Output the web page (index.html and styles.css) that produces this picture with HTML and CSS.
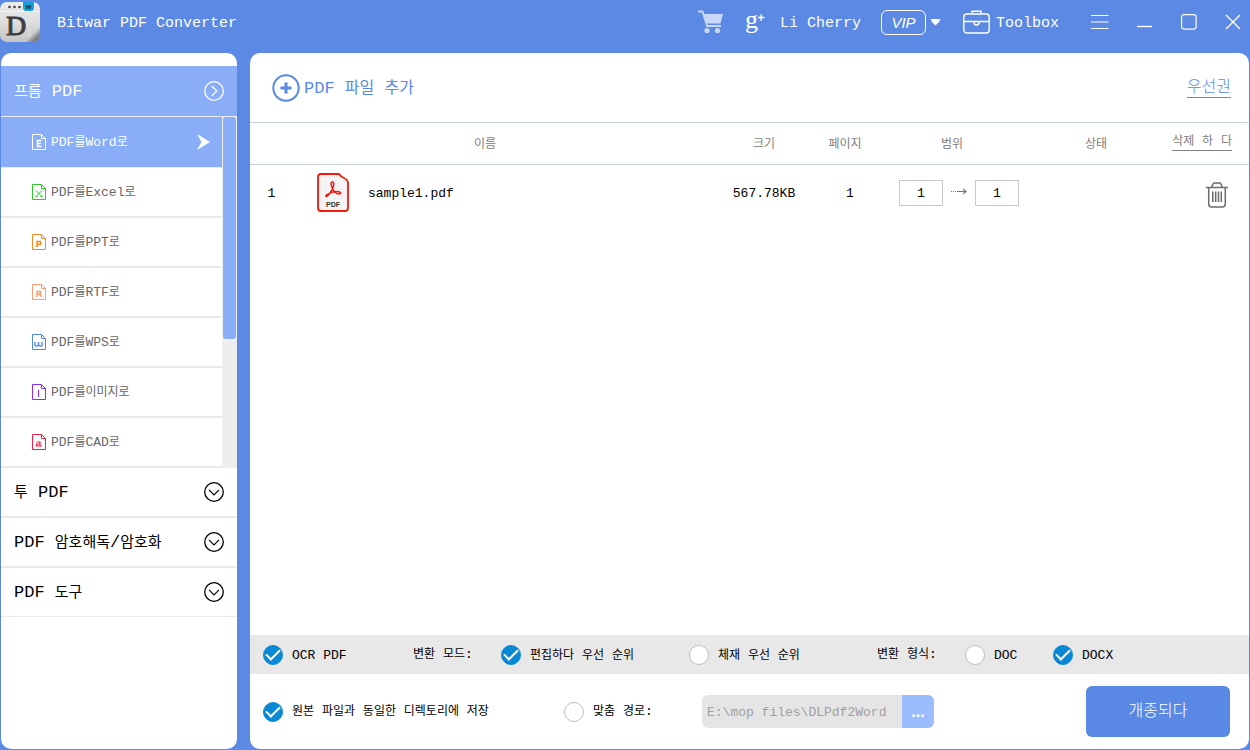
FILE: index.html
```html
<!DOCTYPE html>
<html lang="ko">
<head>
<meta charset="utf-8">
<title>Bitwar PDF Converter</title>
<meta name="viewport" content="width=device-width, initial-scale=1">
<link rel="stylesheet" href="styles.css">
</head>
<body>
<svg class="defs" aria-hidden="true">
  <symbol id="page" viewBox="0 0 14 16"><path d="M.5.5h9l4 4v11H.5zM9.5.5v4h4" fill="none" stroke="currentColor"/></symbol>
  <symbol id="chev" viewBox="0 0 22 22"><circle cx="11" cy="11" r="9.3" fill="none" stroke="currentColor" stroke-width="1.3"/><path d="M6 8.8l5 5 5-5" fill="none" stroke="currentColor" stroke-width="1.2"/></symbol>
</svg>
<header class="titlebar">
  <svg class="logo" viewBox="0 0 40 42">
    <defs>
      <linearGradient id="paper" x1="0" y1="0" x2="0" y2="1"><stop offset="0" stop-color="#ececec"/><stop offset=".5" stop-color="#dedede"/><stop offset="1" stop-color="#c4c4c4"/></linearGradient>
      <linearGradient id="curl" x1="0" y1="0" x2="1" y2="1"><stop offset="0" stop-color="#777"/><stop offset=".2" stop-color="#8b8b8b"/><stop offset=".35" stop-color="#fafafa"/><stop offset=".75" stop-color="#7f7f7f"/></linearGradient>
    </defs>
    <rect y="1" width="40" height="40" rx="7" fill="url(#paper)"/>
    <path d="M1 10.500h38" stroke="#f7f7f7"/>
    <circle cx="9.500" cy="6" r="1.300" fill="#444"/><circle cx="14.500" cy="6" r="1.300" fill="#444"/><circle cx="19.500" cy="6" r="1.300" fill="#444"/>
    <path d="M23 1h11v6q0 2-2 3h-7q-2-1-2-3z" fill="#16a0dc"/>
    <text x="28.500" y="7.500" class="logo-w">W</text>
    <text x="6" y="34" class="logo-d">D</text>
    <path d="M40 26v8q0 7-7 7h-9q4-3 5-8 7-1 11-7z" fill="url(#curl)"/>
  </svg>
  <h1 class="app-name">Bitwar PDF Converter</h1>
  <button class="bare cart" aria-label="Cart"><svg viewBox="0 0 26 24" width="26" height="24"><path d="M0 1.500h4.500L9 16h14" fill="none" stroke="#c9d8f7" stroke-width="1.800"/><path d="M6 4h19l-2.500 9.500H8.500z" fill="#c9d8f7"/><circle cx="9" cy="20.500" r="2.600" fill="#c9d8f7"/><circle cx="19.500" cy="20.500" r="2.600" fill="#c9d8f7"/></svg></button>
  <a class="user" href="#"><svg width="20" height="36" viewBox="0 0 20 36"><text x="0" y="24" class="g-letter">g</text><path d="M13 13.500h6.500M16.250 10.250v6.500" stroke="#fff" stroke-width="1.500"/></svg><span class="label">Li Cherry</span></a>
  <button class="bare vip"><span class="vip-box">VIP</span><svg width="11" height="8" viewBox="0 0 11 8"><path d="M.5 1h10L9 4 5.500 7.500 2 4z" fill="#fff"/></svg></button>
  <button class="bare toolbox"><svg width="27" height="24" viewBox="0 0 27 24" fill="none" stroke="#fff" stroke-width="1.400"><rect x=".8" y="4" width="25.400" height="19" rx="3"/><path d="M9 4V1.200h9V4M1 11.500h25M11 11.500v1q0 2.500 2.500 2.500t2.500-2.500v-1"/></svg><span class="label">Toolbox</span></button>
  <nav class="window-controls">
    <button class="bare" aria-label="Menu"><svg width="18" height="16" viewBox="0 0 18 16"><path d="M0 1.500h17.500M0 8h17.500M0 14.500h17.500" stroke="#fff" stroke-width="1.200"/></svg></button>
    <button class="bare" aria-label="Minimize"><svg width="16" height="16" viewBox="0 0 16 16"><path d="M0 12.500h15" stroke="#fff" stroke-width="1.400"/></svg></button>
    <button class="bare" aria-label="Maximize"><svg width="16" height="16" viewBox="0 0 16 16"><rect x=".6" y=".6" width="14.500" height="14.500" rx="2.500" fill="none" stroke="#fff" stroke-width="1.200"/></svg></button>
    <button class="bare" aria-label="Close"><svg width="16" height="16" viewBox="0 0 16 16"><path d="M1 1l14 14M15 1L1 15" stroke="#fff" stroke-width="1.400"/></svg></button>
  </nav>
</header>
<div class="workspace">
  <aside class="sidebar">
    <button class="group open"><span class="label"><span class="ko">프롬</span> PDF</span><svg class="chev turned"><use href="#chev"/></svg></button>
    <div class="submenu">
      <ul class="tasks">
        <li><button class="task current"><svg class="doc"><use href="#page"/><path d="M9.500 6.500h-4v6h4M5.500 9.500h3.500" stroke-width="1.500"/></svg><span class="label">PDF<span class="ko">를</span>Word<span class="ko">로</span></span><svg class="pointer" viewBox="0 0 13 16"><path d="M0 0l13 8-13 8 4.500-8z" fill="#fff"/></svg></button></li>
        <li><button class="task"><svg class="doc green"><use href="#page"/><path d="M4 6.500l6 6M10 6.500l-6 6M3.500 12.500h2M8.500 12.500h2"/></svg><span class="label">PDF<span class="ko">를</span>Excel<span class="ko">로</span></span></button></li>
        <li><button class="task"><svg class="doc orange"><use href="#page"/><path d="M5 13V7.500h3.500v3H5" stroke-width="1.600"/></svg><span class="label">PDF<span class="ko">를</span>PPT<span class="ko">로</span></span></button></li>
        <li><button class="task"><svg class="doc salmon"><use href="#page"/><path d="M5 13V7.500h3.500v2.500H5M7 10l3 3" stroke-width="1.500"/></svg><span class="label">PDF<span class="ko">를</span>RTF<span class="ko">로</span></span></button></li>
        <li><button class="task"><svg class="doc blue"><use href="#page"/><path d="M3 8v3.500l1.500 1L6.500 11l2 1.500 1.500-1V8M6.500 8v3" stroke-width="1.400"/></svg><span class="label">PDF<span class="ko">를</span>WPS<span class="ko">로</span></span></button></li>
        <li><button class="task"><svg class="doc purple"><use href="#page"/><path d="M6.500 6v7"/></svg><span class="label">PDF<span class="ko">를이미지로</span></span></button></li>
        <li><button class="task"><svg class="doc red"><use href="#page"/><path d="M4.500 8h3.500v4H4.500v-2H8M8 12h2" stroke-width="1.200"/></svg><span class="label">PDF<span class="ko">를</span>CAD<span class="ko">로</span></span></button></li>
      </ul>
      <div class="scroll"><div class="thumb"></div></div>
    </div>
    <button class="group"><span class="label"><span class="ko">투</span> PDF</span><svg class="chev"><use href="#chev"/></svg></button>
    <button class="group"><span class="label">PDF <span class="ko">암호해독</span>/<span class="ko">암호화</span></span><svg class="chev"><use href="#chev"/></svg></button>
    <button class="group last"><span class="label">PDF <span class="ko">도구</span></span><svg class="chev"><use href="#chev"/></svg></button>
  </aside>
  <main class="panel">
    <div class="toolbar">
      <button class="bare add"><svg width="28" height="28" viewBox="0 0 28 28" fill="none" stroke="#5a88e5"><circle cx="14" cy="14" r="12.700" stroke-width="2"/><path d="M8.500 14h11M14 8.500v11" stroke-width="3"/></svg><span class="label">PDF <span class="ko">파일</span> <span class="ko">추가</span></span></button>
      <a class="priority ko" href="#">우선권</a>
    </div>
    <table class="files">
      <colgroup><col class="c-num"><col><col class="c-size"><col class="c-pages"><col class="c-range"><col class="c-state"><col class="c-delete"></colgroup>
      <thead><tr><th></th><th class="name-head">이름</th><th>크기</th><th>페이지</th><th>범위</th><th>상태</th><th class="delete-head"><a href="#"><span class="ko">삭제</span> <span class="ko">하</span> <span class="ko">다</span></a></th></tr></thead>
      <tbody><tr>
        <td>1</td>
        <td><div class="file"><svg width="32" height="39" viewBox="0 0 32 39"><path d="M4 1h18q2 3 5 4 3 1 4 4v26q0 3-3 3H4q-3 0-3-3V4q0-3 3-3z" fill="#f4f4f4" stroke="#f5190c" stroke-width="1.800"/><path d="M15.500 9c-2 0-1.800 2.500-.5 5.500 1.500 3.500 4 6.500 7 6.500 2.500 0 2-2-.5-2.300-4-.4-8.500 1-11.500 3-2 1.400-1 2.500.5 1.300 3-2.300 6.500-9 6.300-12.500C16.700 9.500 16.300 9 15.500 9z" fill="none" stroke="#f5190c" stroke-width="1.500"/><text x="16" y="33.500" class="pdf-text">PDF</text></svg><span class="label">sample1.pdf</span></div></td>
        <td><span class="label">567.78KB</span></td>
        <td class="pages">1</td>
        <td><div class="range"><input type="text" value="1" aria-label="시작 페이지"><svg width="16" height="9" viewBox="0 0 16 9"><path d="M0 3.500h7" stroke="#777" stroke-dasharray="1 1"/><path d="M7 3.500h8M12 1l3 2.500L12 6" fill="none" stroke="#777" stroke-width="1.200"/></svg><input type="text" value="1" aria-label="끝 페이지"></div></td>
        <td></td>
        <td class="trash-cell"><button class="bare trash" aria-label="삭제"><svg width="22" height="26" viewBox="0 0 22 26" fill="none" stroke="#6c6c6c" stroke-width="1.500"><path d="M0 5.500h22M5.500 5.500L7 2q.5-1 1.500-1h5q1 0 1.500 1l1.500 3.500M2.700 5.500V22q0 3 3 3h10.600q3 0 3-3V5.500M6.800 9.500v10.500M9.700 9.500v10.500M12.500 9.500v10.500M15.300 9.500v10.500"/></svg></button></td>
      </tr></tbody>
    </table>
    <form class="options">
      <div class="modes">
        <label class="choice"><input type="checkbox" checked><span class="label">OCR PDF</span></label>
        <span class="caption"><span class="ko">변환</span> <span class="ko">모드</span>:</span>
        <label class="choice"><input type="radio" name="mode" checked><span class="label"><span class="ko">편집하다</span> <span class="ko">우선</span> <span class="ko">순위</span></span></label>
        <label class="choice"><input type="radio" name="mode"><span class="label"><span class="ko">체재</span> <span class="ko">우선</span> <span class="ko">순위</span></span></label>
        <span class="caption"><span class="ko">변환</span> <span class="ko">형식</span>:</span>
        <label class="choice"><input type="radio" name="format"><span class="label">DOC</span></label>
        <label class="choice"><input type="radio" name="format" checked><span class="label">DOCX</span></label>
      </div>
      <div class="output">
        <label class="choice"><input type="radio" name="target" checked><span><span class="ko">원본</span> <span class="ko">파일과</span> <span class="ko">동일한</span> <span class="ko">디렉토리에</span> <span class="ko">저장</span></span></label>
        <label class="choice"><input type="radio" name="target"><span><span class="ko">맞춤</span> <span class="ko">경로</span>:</span></label>
        <div class="path"><input type="text" value="E:\mop files\DLPdf2Word" aria-label="맞춤 경로" readonly><button type="button">...</button></div>
        <button type="button" class="convert">개종되다</button>
      </div>
    </form>
  </main>
</div>
</body>
</html>
```
FILE: styles.css
```css
* { box-sizing: border-box; }

body {
  margin: 0;
  min-height: 100vh;
  display: flex;
  flex-direction: column;
  background: #5b89e4;
  color: #000;
  font: 13px/20px "Liberation Mono", "Noto Sans CJK KR", monospace;
}

button, input { font: inherit; color: inherit; }
button { cursor: pointer; }
svg { flex: none; }
.defs { position: absolute; width: 0; height: 0; }
.ko { font-size: 12px; }
.label { display: inline-block; padding-top: 2px; }

.bare {
  display: flex;
  align-items: center;
  padding: 0;
  border: 0;
  background: none;
}

/* title bar */
.titlebar {
  display: flex;
  align-items: center;
  height: 53px;
  padding: 0 9px 9px 0;
  color: #fff;
  font-size: 15px;
}
.titlebar .label { padding-top: 3px; }
.logo { width: 40px; height: 42px; }
.logo-d { font: 28px "Liberation Serif", serif; fill: #3d3d3d; stroke: #3d3d3d; }
.logo-w { font: bold 6px "Liberation Sans", sans-serif; fill: #123; text-anchor: middle; }
.app-name { margin: 0 auto 0 17px; padding-top: 3px; font-size: 15px; font-weight: 400; }
.user { display: flex; align-items: center; gap: 15px; margin-left: 21px; color: inherit; text-decoration: none; }
.g-letter { font: 26px "Liberation Serif", serif; fill: #fff; }
.vip { gap: 4px; margin-left: 20px; }
.vip-box {
  width: 45px;
  border: 1px solid #fff;
  border-radius: 6px;
  font: italic 15px/23px "Liberation Sans", sans-serif;
}
.toolbox { gap: 6px; margin-left: 22px; }
.window-controls { display: flex; gap: 28px; margin-left: 32px; }

/* layout */
.workspace { flex: 1; display: flex; gap: 13px; padding: 0 1px 1px; }
.sidebar { flex: 0 0 236px; padding-top: 13px; border-radius: 10px; background: #fff; overflow: hidden; }
.panel { flex: 1; min-width: 0; display: flex; flex-direction: column; border-radius: 10px; background: #fff; overflow: hidden; }

/* sidebar */
.group {
  display: flex;
  align-items: center;
  justify-content: space-between;
  width: 100%;
  height: 50px;
  padding: 0 12px 0 13px;
  border: 0;
  border-bottom: 2px solid #ebebeb;
  background: #fff;
  font-size: 17px;
}
.group .ko { font-size: 15px; }
.group.open { height: 51px; border-bottom: 1px solid #ebebeb; background: #8aadf8; color: #fff; }
.group.last { height: 49px; border-bottom-width: 1px; }
.chev { width: 22px; height: 22px; }
.turned { transform: rotate(-90deg); }
.submenu { display: flex; }
.tasks { flex: 1; margin: 0; padding: 0; list-style: none; }
.task {
  display: flex;
  align-items: center;
  gap: 5px;
  width: 100%;
  height: 50px;
  padding: 0 12px 0 31px;
  border: 0;
  border-bottom: 2px solid #ebebeb;
  background: #fff;
  color: #666;
}
.task.current { height: 51px; border-bottom-width: 1px; background: #8aadf8; color: #fff; }
.doc { width: 14px; height: 16px; fill: none; stroke: currentColor; }
.green { color: #2bcb2b; }
.orange { color: #f88a22; }
.salmon { color: #fb9d76; }
.blue { color: #5487df; }
.purple { color: #8b2df0; }
.red { color: #f02040; }
.pointer { width: 13px; height: 16px; margin-left: auto; }
.scroll { width: 15px; padding: 0 1px; background: #efeeee; }
.thumb { height: 222px; border-radius: 3px; background: #8aadf8; }

/* file list */
.toolbar { display: flex; align-items: center; justify-content: space-between; height: 69px; padding: 0 18px 0 22px; color: #5a88e5; }
.add { gap: 4px; font-size: 17px; }
.add .ko, .priority { font-size: 16px; }
.priority { padding-top: 2px; color: inherit; font-weight: 300; line-height: 18px; text-decoration: none; border-bottom: 1px solid; }
.toolbar .priority { font-size: 16px; }
.files { width: 100%; table-layout: fixed; border-collapse: collapse; text-align: center; }
.files th {
  height: 42px;
  padding: 2px 0 0;
  border: solid #c9d3de;
  border-width: 1px 0;
  color: #808080;
  font-size: 12px;
  font-weight: 400;
}
.files td { height: 56px; padding: 0; }
.c-num { width: 43px; }
.c-size { width: 90px; }
.c-pages { width: 72px; }
.c-range { width: 142px; }
.c-state { width: 146px; }
.c-delete { width: 80px; }
.files .name-head { padding-right: 42px; }
.files .delete-head { padding: 0 17px 4px 0; font-size: 13px; text-align: right; }
.delete-head a { display: inline-block; line-height: 16px; color: inherit; text-decoration: none; border-bottom: 1px solid; }
.file { display: flex; align-items: center; gap: 19px; padding-left: 24px; }
.pdf-text { font: bold 7px "Liberation Sans", sans-serif; fill: #333; text-anchor: middle; }
.files td:first-child { padding-top: 2px; }
.files .pages { padding: 2px 0 0 10px; }
.range { display: flex; align-items: center; gap: 8px; padding-left: 18px; }
.range input { width: 44px; height: 26px; padding: 2px 0 0; border: 1px solid #c8c8c8; text-align: center; }
.files .trash-cell { padding: 4px 21px 0 0; }
.trash { margin-left: auto; }

/* options */
.options { margin-top: auto; }
.modes {
  display: grid;
  grid-template-columns: 150px 88px 188px 188px 88px 88px auto;
  align-items: center;
  height: 39px;
  padding: 0 13px;
  background: #e8e8e8;
}
.choice { display: flex; align-items: center; gap: 9px; white-space: nowrap; }
.choice input {
  appearance: none;
  display: grid;
  place-items: center;
  width: 20px;
  height: 20px;
  margin: 0;
  border: 1px solid #bfbfbf;
  border-radius: 50%;
  background: #fff;
}
.choice input:checked { border-color: #0989d5; background: #0989d5; }
.choice input:checked::before {
  content: "";
  width: 12px;
  height: 6px;
  margin-bottom: 3px;
  border: solid #fff;
  border-width: 0 0 2px 2px;
  transform: rotate(-45deg);
}
.output {
  display: grid;
  grid-template-columns: 301px 138px 232px 1fr;
  align-items: center;
  height: 75px;
  padding: 0 19px 0 13px;
}
.path { display: flex; height: 33px; border-radius: 6px; overflow: hidden; }
.path input { flex: 1; min-width: 0; padding: 2px 5px 0; border: 0; background: #e5e5e5; color: #a0a0a0; }
.path button { width: 32px; padding: 0; border: 0; background: #9bbcff; color: #fff; font: bold 16px "Liberation Sans", sans-serif; }
.convert {
  justify-self: end;
  width: 144px;
  height: 51px;
  border: 0;
  border-radius: 6px;
  background: #5a88e5;
  color: #fff;
  font-size: 16px;
  font-weight: 300;
}
```
